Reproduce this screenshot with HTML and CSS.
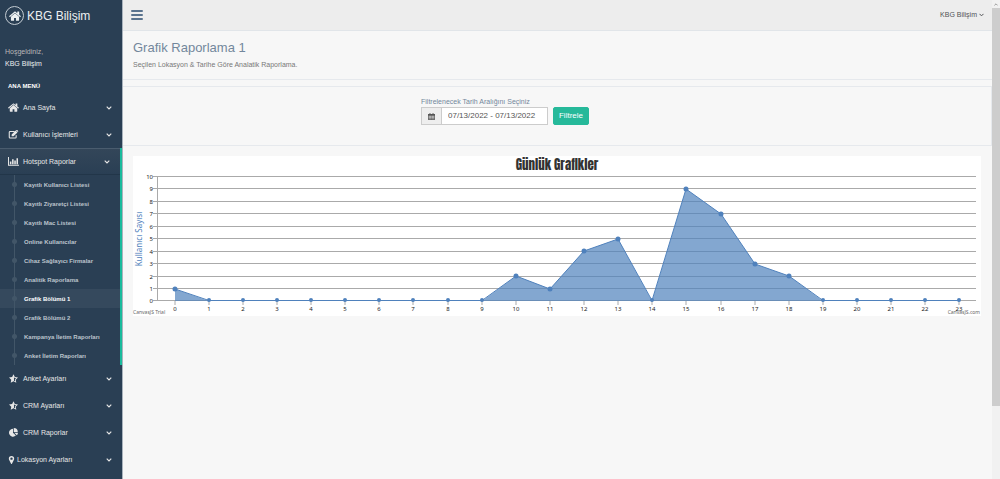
FILE: index.html
```html
<!DOCTYPE html>
<html lang="tr">
<head>
<meta charset="utf-8">
<meta name="viewport" content="width=device-width, initial-scale=1">
<title>KBG Bilişim</title>
<link rel="stylesheet" href="styles.css">
</head>
<body>
<svg class="defs" aria-hidden="true">
  <symbol id="home" viewBox="0 0 20 16"><path d="M10 3.6 3.2 9.3V15c0 .5.4.9.9.9h4.3v-4.700h3.200v4.700h4.300c.5 0 .9-.4.9-.9V9.300z"/><path d="M19.600 8.200 17 6V1.200c0-.3-.2-.5-.5-.5h-2.200c-.3 0-.5.2-.5.5v2.200L11 1c-.6-.5-1.500-.5-2 0L.4 8.200c-.2.200-.2.400 0 .600l.700.800c.2.200.400.200.600 0L10 2.700l8.300 6.900c.2.200.400.200.600 0l.700-.800c.2-.2.200-.4 0-.6z"/></symbol>
  <symbol id="edit" viewBox="0 0 20 17"><path d="M15 10.500v3.200a1.500 1.500 0 0 1-1.500 1.500h-10A1.500 1.500 0 0 1 2 13.700v-9.400a1.500 1.500 0 0 1 1.500-1.500h8" fill="none" stroke="currentColor" stroke-width="2" stroke-linecap="round"/><path d="M6.500 8.500 14 1l3.500 3.500-7.500 7.500H6.500zM15 0c.6-.6 1.400-.6 2 0l1.500 1.500c.6.600.6 1.400 0 2l-.5.500L14.500.5z"/></symbol>
  <symbol id="bars" viewBox="0 0 20 16"><path d="M0 0h1.800v13.700H20v1.800H0zM3.400 8h2.800v4.800H3.400zM7.400 4h2.800v8.800H7.400zM11.400 6h2.800v6.800h-2.800zM15.400 2h2.800v10.800h-2.800z"/></symbol>
  <symbol id="star" viewBox="0 0 20 19"><path d="m10 .5 2.900 6 6.600.9-4.800 4.600 1.200 6.600L10 15.500l-5.900 3.100L5.300 12 .5 7.400l6.600-.9z"/><path d="M11 5.500v8.500l2.500 1.300-.6-3.900 2.700-2.600-3.600-.6z" fill="#2a3f54"/></symbol>
  <symbol id="pie" viewBox="0 0 18 18"><path d="M8 1.500V9.500l5.700 5.700A8 8 0 1 1 8 1.500z"/><path d="M9.500 0a8 8 0 0 1 8 8h-8zM10.500 9.500h7.500a8 8 0 0 1-2.400 5.200z"/></symbol>
  <symbol id="pin" viewBox="0 0 12 18"><path fill-rule="evenodd" d="M6 0a6 6 0 0 1 6 6c0 1-.2 1.700-.5 2.300L7 17.300c-.4.800-1.600.8-2 0L.5 8.300A5.500 5.500 0 0 1 0 6a6 6 0 0 1 6-6zm0 3.300a2.700 2.700 0 1 0 0 5.400 2.700 2.700 0 0 0 0-5.400z"/></symbol>
  <symbol id="chevron" viewBox="0 0 10 7"><path d="m1 1.200 4 4 4-4" fill="none" stroke="currentColor" stroke-width="2"/></symbol>
  <symbol id="calendar" viewBox="0 0 16 16"><path fill-rule="evenodd" d="M1 2h2.500V0h2v2h5V0h2v2H15c.6 0 1 .4 1 1v12c0 .6-.4 1-1 1H1c-.6 0-1-.4-1-1V3c0-.6.4-1 1-1zm.500 4.500v2h2.500v-2zm3.500 0v2h2.500v-2zm3.500 0v2H11v-2zm3.500 0v2h2.500v-2zm-10.500 3v2h2.500v-2zm3.500 0v2h2.500v-2zm3.500 0v2H11v-2zm3.500 0v2h2.500v-2zm-10.500 3v2h2.500v-2zm3.500 0v2h2.500v-2zm3.500 0v2H11v-2zm3.500 0v2h2.500v-2z"/></symbol>
</svg>
<div class="page">
  <aside class="sidebar">
    <a class="brand" href="#"><span class="brand-mark"><svg><use href="#home"/></svg></span>KBG Bilişim</a>
    <div class="welcome"><span>Hoşgeldiniz,</span><strong>KBG Bilişim</strong></div>
    <h3 class="menu-title">ANA MENÜ</h3>
    <nav>
      <ul class="menu">
        <li><a href="#"><svg class="icon"><use href="#home"/></svg>Ana Sayfa<svg class="chev"><use href="#chevron"/></svg></a></li>
        <li><a href="#"><svg class="icon"><use href="#edit"/></svg>Kullanıcı İşlemleri<svg class="chev"><use href="#chevron"/></svg></a></li>
        <li class="open"><a href="#"><svg class="icon"><use href="#bars"/></svg>Hotspot Raporlar<svg class="chev"><use href="#chevron"/></svg></a>
          <ul class="submenu">
            <li><a href="#">Kayıtlı Kullanıcı Listesi</a></li>
            <li><a href="#">Kayıtlı Ziyaretçi Listesi</a></li>
            <li><a href="#">Kayıtlı Mac Listesi</a></li>
            <li><a href="#">Online Kullanıcılar</a></li>
            <li><a href="#">Cihaz Sağlayıcı Firmalar</a></li>
            <li><a href="#">Analitik Raporlama</a></li>
            <li class="current"><a href="#">Grafik Bölümü 1</a></li>
            <li><a href="#">Grafik Bölümü 2</a></li>
            <li><a href="#">Kampanya İletim Raporları</a></li>
            <li><a href="#">Anket İletim Raporları</a></li>
          </ul>
        </li>
        <li><a href="#"><svg class="icon"><use href="#star"/></svg>Anket Ayarları<svg class="chev"><use href="#chevron"/></svg></a></li>
        <li><a href="#"><svg class="icon"><use href="#star"/></svg>CRM Ayarları<svg class="chev"><use href="#chevron"/></svg></a></li>
        <li><a href="#"><svg class="icon"><use href="#pie"/></svg>CRM Raporlar<svg class="chev"><use href="#chevron"/></svg></a></li>
        <li><a href="#"><svg class="icon narrow"><use href="#pin"/></svg>Lokasyon Ayarları<svg class="chev"><use href="#chevron"/></svg></a></li>
      </ul>
    </nav>
  </aside>
  <main class="main">
    <header class="topbar">
      <button class="toggle" type="button" aria-label="Menü"><i></i><i></i><i></i></button>
      <button class="user" type="button">KBG Bilişim<svg><use href="#chevron"/></svg></button>
    </header>
    <section class="heading">
      <h1>Grafik Raporlama 1</h1>
      <p>Seçilen Lokasyon &amp; Tarihe Göre Analatik Raporlama.</p>
    </section>
    <section class="filter">
      <form class="filter-form">
        <label for="range">Filtrelenecek Tarih Aralığını Seçiniz</label>
        <div class="filter-row">
          <div class="input-group">
            <span class="addon"><svg><use href="#calendar"/></svg></span>
            <input id="range" type="text" value="07/13/2022 - 07/13/2022">
          </div>
          <button class="submit" type="button">Filtrele</button>
        </div>
      </form>
    </section>
    <section class="chart">
      <svg viewBox="0 0 848 160" role="img" aria-label="Günlük Grafikler">
        <text class="chart-title" x="424" y="14">Günlük Grafikler</text>
        <path class="grid" d="M20 20.500H843M20 32.500H843M20 45.500H843M20 57.500H843M20 70.500H843M20 82.500H843M20 95.500H843M20 107.500H843M20 120.500H843M20 132.500H843M20 144.500H843M24.500 20V145"/>
        <path class="grid" d="M42 145v4M76 145v4M110 145v4M144 145v4M178 145v4M212 145v4M246 145v4M280 145v4M315 145v4M349 145v4M383 145v4M417 145v4M451 145v4M485 145v4M519 145v4M553 145v4M588 145v4M622 145v4M656 145v4M690 145v4M724 145v4M758 145v4M792 145v4M826 145v4"/>
        <path class="area" d="M42 145V133L76 145H349L383 120L417 133L451 95L485 83L519 145L553 33L588 58L622 108L656 120L690 145H826z"/>
        <path class="line" d="M42 133L76 144.500H349L383 120L417 133L451 95L485 83L519 144.500L553 33L588 58L622 108L656 120L690 144.500H826"/>
        <path class="dots" d="M42 133h0M383 120h0M417 133h0M451 95h0M485 83h0M553 33h0M588 58h0M622 108h0M656 120h0"/>
        <path class="dots zero" d="M76 144h0M110 144h0M144 144h0M178 144h0M212 144h0M246 144h0M280 144h0M315 144h0M349 144h0M519 144h0M690 144h0M724 144h0M758 144h0M792 144h0M826 144h0"/>
        <g class="y-labels">
          <text x="20" y="23">10</text><text x="20" y="35">9</text><text x="20" y="48">8</text><text x="20" y="60">7</text><text x="20" y="73">6</text><text x="20" y="85">5</text><text x="20" y="98">4</text><text x="20" y="110">3</text><text x="20" y="123">2</text><text x="20" y="135">1</text><text x="20" y="147">0</text>
        </g>
        <g class="x-labels">
          <text x="42" y="155">0</text><text x="76" y="155">1</text><text x="110" y="155">2</text><text x="144" y="155">3</text><text x="178" y="155">4</text><text x="212" y="155">5</text><text x="246" y="155">6</text><text x="280" y="155">7</text><text x="315" y="155">8</text><text x="349" y="155">9</text><text x="383" y="155">10</text><text x="417" y="155">11</text><text x="451" y="155">12</text><text x="485" y="155">13</text><text x="519" y="155">14</text><text x="553" y="155">15</text><text x="588" y="155">16</text><text x="622" y="155">17</text><text x="656" y="155">18</text><text x="690" y="155">19</text><text x="724" y="155">20</text><text x="758" y="155">21</text><text x="792" y="155">22</text><text x="826" y="155">23</text>
        </g>
        <text class="axis-title" transform="translate(9 83) rotate(-90)">Kullanıcı Sayısı</text>
        <text class="credit" x="0" y="158">CanvasJS Trial</text>
        <text class="credit end" x="847" y="158">CanvasJS.com</text>
      </svg>
    </section>
  </main>
  <div class="scrollbar" aria-hidden="true"><span class="scroll-up"><svg><use href="#chevron"/></svg></span><span class="thumb"></span></div>
</div>
</body>
</html>
```
FILE: styles.css
```css
* { box-sizing: border-box; }
body {
  margin: 0;
  background: #f7f7f7;
  color: #73879c;
  font: 7px/10px "Liberation Sans", Arial, sans-serif;
}
a { color: inherit; text-decoration: none; }
button, input { font: inherit; }
ul { list-style: none; margin: 0; padding: 0; }
svg { fill: currentColor; }
.defs { position: absolute; width: 0; height: 0; }
.page { display: flex; min-height: 100vh; }

.sidebar {
  flex: 0 0 123px;
  background: #2a3f54;
  border-right: 1px solid #a9b3bd;
  color: #e7e7e7;
}
.brand {
  display: flex;
  align-items: center;
  gap: 3px;
  height: 31px;
  padding-left: 5px;
  color: #ecf0f1;
  font-size: 12px;
  line-height: 16px;
}
.brand-mark {
  display: flex;
  align-items: center;
  justify-content: center;
  width: 19px;
  height: 19px;
  border: 1px solid #c3cbd2;
  border-radius: 50%;
}
.brand-mark svg { width: 12px; height: 10px; }
.welcome { padding: 15px 5px 0; color: #bab8b8; }
.welcome span, .welcome strong { display: block; line-height: 12px; }
.welcome strong { color: #ecf0f1; font-weight: 400; }
.menu-title {
  margin: 0;
  padding: 11px 8px 3px;
  color: #fff;
  font-size: 6px;
  line-height: 10px;
  font-weight: 700;
}
.menu > li > a {
  display: flex;
  align-items: center;
  height: 27px;
  padding: 0 10px 0 8px;
}
.icon { width: 11px; height: 9px; margin-right: 4px; }
.icon.narrow { width: 7px; height: 8px; margin-right: 2px; }
.chev { width: 6px; height: 4px; margin-left: auto; }
.menu > .open { border-right: 2px solid #1abb9c; }
.menu > .open > a {
  border-top: 1px solid #4a5c6e;
  border-bottom: 1px solid #223649;
  background: linear-gradient(#334659, #2a3f54);
}
.submenu a {
  display: flex;
  align-items: center;
  height: 19px;
  color: #bcc4cc;
  font-size: 6px;
  font-weight: 700;
}
.submenu a::before {
  content: "";
  align-self: stretch;
  width: 5px;
  margin: 0 7px 0 12px;
  background:
    radial-gradient(circle, #425668 2px, transparent 3px),
    linear-gradient(#425668, #425668) center / 1px 100% no-repeat;
}
.submenu .current a { background: #35495d; color: #fff; }

.main { flex: 1; min-width: 0; }
.topbar {
  display: flex;
  align-items: center;
  justify-content: space-between;
  height: 31px;
  padding: 0 8px;
  background: #ededed;
  border-bottom: 1px solid #e1e5e9;
}
.toggle, .user { padding: 0; border: 0; background: none; }
.toggle { display: grid; gap: 2px; width: 12px; }
.toggle i { height: 2px; border-radius: 1px; background: #5a738e; }
.user { display: flex; align-items: center; gap: 2px; color: #515356; }
.user svg { width: 5px; height: 4px; }
.heading { padding: 8px 10px 9px; border-bottom: 1px solid #e6e9ed; }
.heading h1 {
  margin: 0;
  font-size: 13px;
  line-height: 18px;
  font-weight: 400;
}
.heading p { margin: 3px 0 0; color: #777; }
.filter {
  display: flex;
  justify-content: center;
  margin-top: 6px;
  padding: 10px 10px 20px;
  border: 1px solid #e6e9ed;
  border-width: 1px 1px 1px 0;
}
.filter-form { margin-right: 104px; }
.filter-form label { display: block; }
.filter-row { display: flex; gap: 5px; }
.input-group { display: flex; width: 127px; height: 18px; border: 1px solid #ccc; }
.addon {
  display: flex;
  align-items: center;
  justify-content: center;
  width: 20px;
  background: #eee;
  border-right: 1px solid #ccc;
  color: #555;
}
.addon svg { width: 7px; height: 7px; }
.input-group input {
  flex: 1;
  min-width: 0;
  padding: 0 6px;
  border: 0;
  background: #fff;
  color: #555;
  font-size: 8px;
}
.submit {
  height: 18px;
  width: 36px;
  padding: 0;
  border: 1px solid #26b99a;
  border-radius: 2px;
  background: #26b99a;
  color: #fff;
  font-size: 8px;
}
.chart { margin: 10px 11px 0 10px; background: #fff; }
.chart svg { display: block; width: 100%; height: auto; overflow: visible; }
.chart text { font-family: "Noto Sans", sans-serif; font-size: 6px; fill: #222; }
.chart .chart-title {
  font-family: Anton, Impact, "Liberation Sans Narrow", "DejaVu Sans Condensed", sans-serif;
  font-size: 13px;
  font-weight: 400;
  text-anchor: middle;
  fill: #333;
}
.chart .grid { fill: none; stroke: #aaa; stroke-width: 1px; }
.area { fill: #4f81bc; fill-opacity: .7; }
.line { fill: none; stroke: #4f81bc; stroke-width: 1px; }
.chart .dots { fill: none; stroke: #4f81bc; stroke-width: 5px; stroke-linecap: round; }
.chart .zero { stroke-width: 4px; }
.y-labels text { text-anchor: end; }
.x-labels text { text-anchor: middle; }
.chart .axis-title { font-size: 8px; text-anchor: middle; fill: #4f81bc; }
.chart .credit { font-size: 5px; fill: #666; }
.chart .credit.end { text-anchor: end; }

.scrollbar { flex: 0 0 8px; display: flex; flex-direction: column; background: #f1f1f1; }
.scroll-up { display: flex; align-items: center; justify-content: center; height: 8px; color: #888; }
.scroll-up svg { width: 4px; height: 3px; transform: rotate(180deg); }
.thumb { height: 83%; background: #cdcdcd; }
```
